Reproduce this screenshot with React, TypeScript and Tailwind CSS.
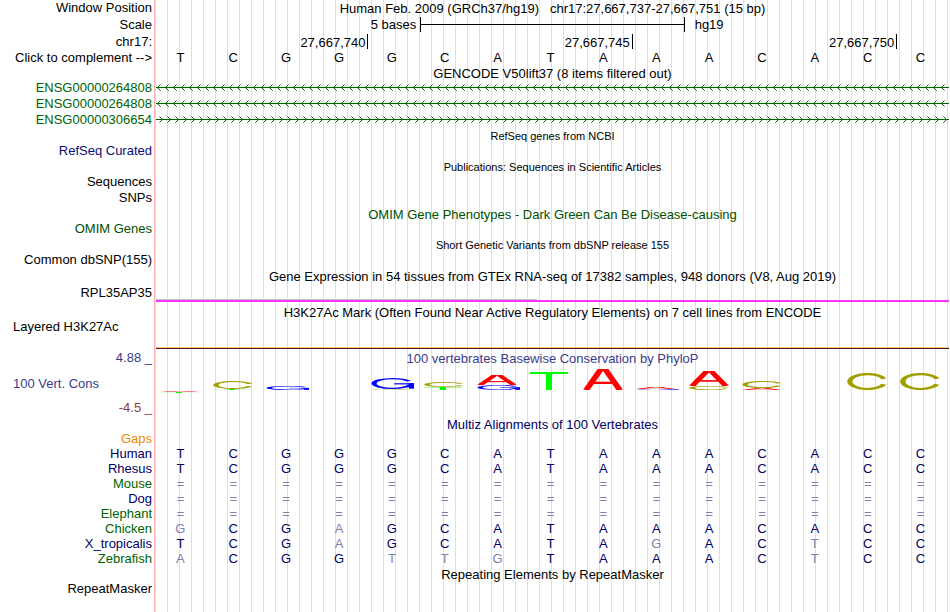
import type { ReactNode } from "react";

const SEQUENCE = "TCGGGCATAAACACC";

type LogoMark = { letter: "A" | "C" | "G" | "T"; top: number; height: number };

// Stacked marks for every base, in pixels from the top of the logo track
const LOGO: LogoMark[][] = [
  [{ letter: "A", top: 23, height: 1 }, { letter: "T", top: 24, height: 1 }],
  [{ letter: "C", top: 13, height: 8 }, { letter: "T", top: 21, height: 1 }],
  [{ letter: "G", top: 18, height: 4 }],
  [],
  [{ letter: "G", top: 10, height: 11 }, { letter: "C", top: 21, height: 1 }],
  [{ letter: "C", top: 14, height: 5 }, { letter: "T", top: 19, height: 3 }],
  [{ letter: "A", top: 7, height: 10 }, { letter: "G", top: 17, height: 5 }],
  [{ letter: "T", top: 4, height: 18 }],
  [{ letter: "A", top: 1, height: 21 }],
  [{ letter: "A", top: 19, height: 2 }, { letter: "G", top: 21, height: 1 }],
  [{ letter: "A", top: 3, height: 15 }, { letter: "C", top: 18, height: 4 }],
  [{ letter: "C", top: 13, height: 7 }, { letter: "A", top: 20, height: 2 }],
  [],
  [{ letter: "C", top: 5, height: 17 }],
  [{ letter: "C", top: 5, height: 17 }],
];

const MARK_WIDTH = { A: "w-10", C: "w-[41px]", G: "w-[43px]", T: "w-[38px]" };

const SPECIES = [
  { name: "Human", color: "text-[#000064]", bases: "TCGGGCATAAACACC" },
  { name: "Rhesus", color: "text-[#000064]", bases: "TCGGGCATAAACACC" },
  { name: "Mouse", color: "text-[#006400]", bases: "===============" },
  { name: "Dog", color: "text-[#000064]", bases: "===============" },
  { name: "Elephant", color: "text-[#006400]", bases: "===============" },
  { name: "Chicken", color: "text-[#006400]", bases: "GCGAGCATAAACACC" },
  { name: "X_tropicalis", color: "text-[#000064]", bases: "TCGAGCATAGACTCC" },
  { name: "Zebrafish", color: "text-[#006400]", bases: "ACGGTTGTAAACTCC" },
];

type RowProps = {
  label?: ReactNode;
  height: string;
  color?: string;
  left?: boolean;
  children?: ReactNode;
};

function Row({ label, height, color = "text-black", left, children }: RowProps) {
  return (
    <div className={`flex ${height}`}>
      <div
        className={`flex w-[154px] shrink-0 items-center pr-0.5 pb-0.5 pl-[13px] whitespace-nowrap ${
          left ? "justify-start" : "justify-end"
        } ${color}`}
      >
        {label}
      </div>
      <div className="ml-0.5 mr-px min-w-0 flex-1">{children}</div>
    </div>
  );
}

function Title({ children, color = "text-black", small }: { children: ReactNode; color?: string; small?: boolean }) {
  return (
    <h2
      className={`flex h-full items-center justify-center whitespace-pre ${small ? "pt-0.5 text-[11px]" : ""} ${color}`}
    >
      {children}
    </h2>
  );
}

function Bases({ bases, aligned }: { bases: string; aligned?: boolean }) {
  return (
    <div className="-ml-0.5 mr-0.5 grid h-full grid-cols-15 items-center pb-0.5 text-center">
      {bases.split("").map((base, i) => {
        const color = !aligned ? "text-black" : base === SEQUENCE[i] ? "text-[#000064]" : "text-[#8080b0]";
        return (
          <span key={i} className={color}>
            {base}
          </span>
        );
      })}
    </div>
  );
}

function GeneLine({ id, reverse }: { id: string; reverse?: boolean }) {
  return (
    <svg className="block h-4 w-full" aria-hidden="true">
      <defs>
        <pattern id={id} width="8" height="16" patternUnits="userSpaceOnUse">
          <path
            d={
              reverse
                ? "M2 6h1v1h-1zM2 8h1v1h-1zM3 5h1v1h-1zM3 9h1v1h-1z"
                : "M5 6h1v1h-1zM5 8h1v1h-1zM4 5h1v1h-1zM4 9h1v1h-1z"
            }
            fill="#006400"
          />
          <path
            d={reverse ? "M4 4h1v1h-1zM4 10h1v1h-1z" : "M3 4h1v1h-1zM3 10h1v1h-1z"}
            fill="#006400"
            opacity="0.5"
          />
        </pattern>
      </defs>
      <rect width="100%" height="16" fill={`url(#${id})`} />
      <rect y="7" width="100%" height="1" fill="#006400" />
    </svg>
  );
}

// Chart mark of one base, stretched to the height of its score
function Mark({ letter, height }: { letter: LogoMark["letter"]; height: number }) {
  return (
    <svg
      className={`block ${MARK_WIDTH[letter]}`}
      height={height}
      viewBox="0 0 100 100"
      preserveAspectRatio="none"
      aria-hidden="true"
    >
      {letter === "A" && (
        <g stroke="#ff0000">
          <line x1="45" y1="0" x2="8" y2="100" strokeWidth="16" />
          <line x1="55" y1="0" x2="92" y2="100" strokeWidth="16" />
          <line x1="24" y1="66" x2="76" y2="66" strokeWidth="11" />
        </g>
      )}
      {letter === "C" && (
        <ellipse
          cx="50"
          cy="50"
          rx="43"
          ry="44"
          fill="none"
          stroke="#a0a000"
          strokeWidth="13"
          pathLength="100"
          strokeDasharray="88 12"
          strokeDashoffset="-6"
        />
      )}
      {letter === "G" && (
        <g fill="none" stroke="#0000ff">
          <ellipse
            cx="50"
            cy="50"
            rx="43"
            ry="44"
            strokeWidth="12"
            pathLength="100"
            strokeDasharray="88 12"
            strokeDashoffset="-4"
          />
          <line x1="54" y1="53" x2="100" y2="53" strokeWidth="11" />
          <line x1="94" y1="48" x2="94" y2="97" strokeWidth="12" />
        </g>
      )}
      {letter === "T" && (
        <g fill="#00ff00">
          <rect width="100" height="11" />
          <rect x="42" width="16" height="100" />
        </g>
      )}
    </svg>
  );
}

export default function App() {
  return (
    <main className="min-h-screen w-full overflow-hidden bg-white bg-[linear-gradient(to_right,white_154px,#ffb4b4_154px,#ffb4b4_155px,transparent_155px),repeating-linear-gradient(to_right,transparent_0px,transparent_11px,#dcdcf5_11px,#dcdcf5_12px)] font-['Liberation_Sans',Arial,sans-serif] text-[13px] leading-none">
      <Row label="Window Position" height="h-[17px]">
        <Title>{"Human Feb. 2009 (GRCh37/hg19)   chr17:27,667,737-27,667,751 (15 bp)"}</Title>
      </Row>
      <Row label="Scale" height="h-[17px]">
        <div className="grid h-full grid-cols-3 items-center pb-0.5">
          <span className="pr-1 text-right">5 bases</span>
          <div className="flex h-[15px] items-center border-x border-black">
            <div className="h-px w-full bg-black" />
          </div>
          <span className="pl-2.5">hg19</span>
        </div>
      </Row>
      <Row label="chr17:" height="h-[17px]">
        <div className="ml-px -mr-px grid grid-cols-15 text-right leading-[17px]">
          <span className="col-span-4 h-[15px] border-r border-black pr-0.5">27,667,740</span>
          <span className="col-span-5 h-[15px] border-r border-black pr-0.5">27,667,745</span>
          <span className="col-span-5 h-[15px] border-r border-black pr-0.5">27,667,750</span>
        </div>
      </Row>
      <Row label={<button type="button">Click to complement --&gt;</button>} height="h-[15px]">
        <Bases bases={SEQUENCE} />
      </Row>

      {/* Genes */}
      <Row height="h-3.5">
        <Title>GENCODE V50lift37 (8 items filtered out)</Title>
      </Row>
      <Row label="ENSG00000264808" height="h-4" color="text-[#006400]">
        <GeneLine id="gene-1" reverse />
      </Row>
      <Row label="ENSG00000264808" height="h-4" color="text-[#006400]">
        <GeneLine id="gene-2" reverse />
      </Row>
      <Row label="ENSG00000306654" height="h-4" color="text-[#006400]">
        <GeneLine id="gene-3" />
      </Row>
      <Row height="h-[15px]">
        <Title small>RefSeq genes from NCBI</Title>
      </Row>
      <Row label="RefSeq Curated" height="h-4" color="text-[#0c0c78]" />

      {/* Publications and variants */}
      <Row height="h-[15px]">
        <Title small>Publications: Sequences in Scientific Articles</Title>
      </Row>
      <Row label="Sequences" height="h-4" />
      <Row label="SNPs" height="h-4" />
      <Row height="h-4">
        <Title color="text-[#005000]">OMIM Gene Phenotypes - Dark Green Can Be Disease-causing</Title>
      </Row>
      <Row label="OMIM Genes" height="h-[15px]" color="text-[#005000]" />
      <Row height="h-[15px]">
        <Title small>Short Genetic Variants from dbSNP release 155</Title>
      </Row>
      <Row label="Common dbSNP(155)" height="h-4" />

      {/* Expression and regulation */}
      <Row height="h-[17px]">
        <Title>Gene Expression in 54 tissues from GTEx RNA-seq of 17382 samples, 948 donors (V8, Aug 2019)</Title>
      </Row>
      <Row label="RPL35AP35" height="h-[17px]">
        <div className="flex h-full flex-col justify-end">
          <div className="h-px w-[48%] bg-[#c8c8c8]" />
          <div className="h-0.5 bg-[#ff33ff]" />
        </div>
      </Row>
      <Row height="h-5">
        <Title>H3K27Ac Mark (Often Found Near Active Regulatory Elements) on 7 cell lines from ENCODE</Title>
      </Row>
      <Row label="Layered H3K27Ac" height="h-2.5" left />
      <Row height="h-[17px]">
        <div className="flex h-full flex-col justify-end">
          <div className="h-px bg-[#ffc864]" />
          <div className="h-px bg-[#501432]" />
        </div>
      </Row>

      {/* Conservation */}
      <Row label="4.88 _" height="h-[19px]" color="text-[#3c3c8c]">
        <Title color="text-[#3c3c8c]">100 vertebrates Basewise Conservation by PhyloP</Title>
      </Row>
      <Row label="100 Vert. Cons" height="h-8" color="text-[#3c3c8c]" left>
        <div
          role="img"
          aria-label="Conservation scores by base"
          className="-ml-0.5 mr-0.5 grid h-full grid-cols-15"
        >
          {LOGO.map((marks, i) => (
            <div key={i} className="relative">
              {marks.map((mark) => (
                <div key={mark.letter} className="absolute left-1.5" style={{ top: mark.top }}>
                  <Mark letter={mark.letter} height={mark.height} />
                </div>
              ))}
            </div>
          ))}
        </div>
      </Row>
      <Row label="-4.5 _" height="h-4" color="text-[#8c3c3c]" />

      {/* Alignments */}
      <Row height="h-4">
        <Title color="text-[#000064]">Multiz Alignments of 100 Vertebrates</Title>
      </Row>
      <Row label="Gaps" height="h-[15px]" color="text-[#eb8c00]" />
      {SPECIES.map((species) => (
        <Row key={species.name} label={species.name} height="h-[15px]" color={species.color}>
          <Bases bases={species.bases} aligned />
        </Row>
      ))}
      <Row height="h-[15px]">
        <Title>Repeating Elements by RepeatMasker</Title>
      </Row>
      <Row label="RepeatMasker" height="h-3.5" />
    </main>
  );
}
